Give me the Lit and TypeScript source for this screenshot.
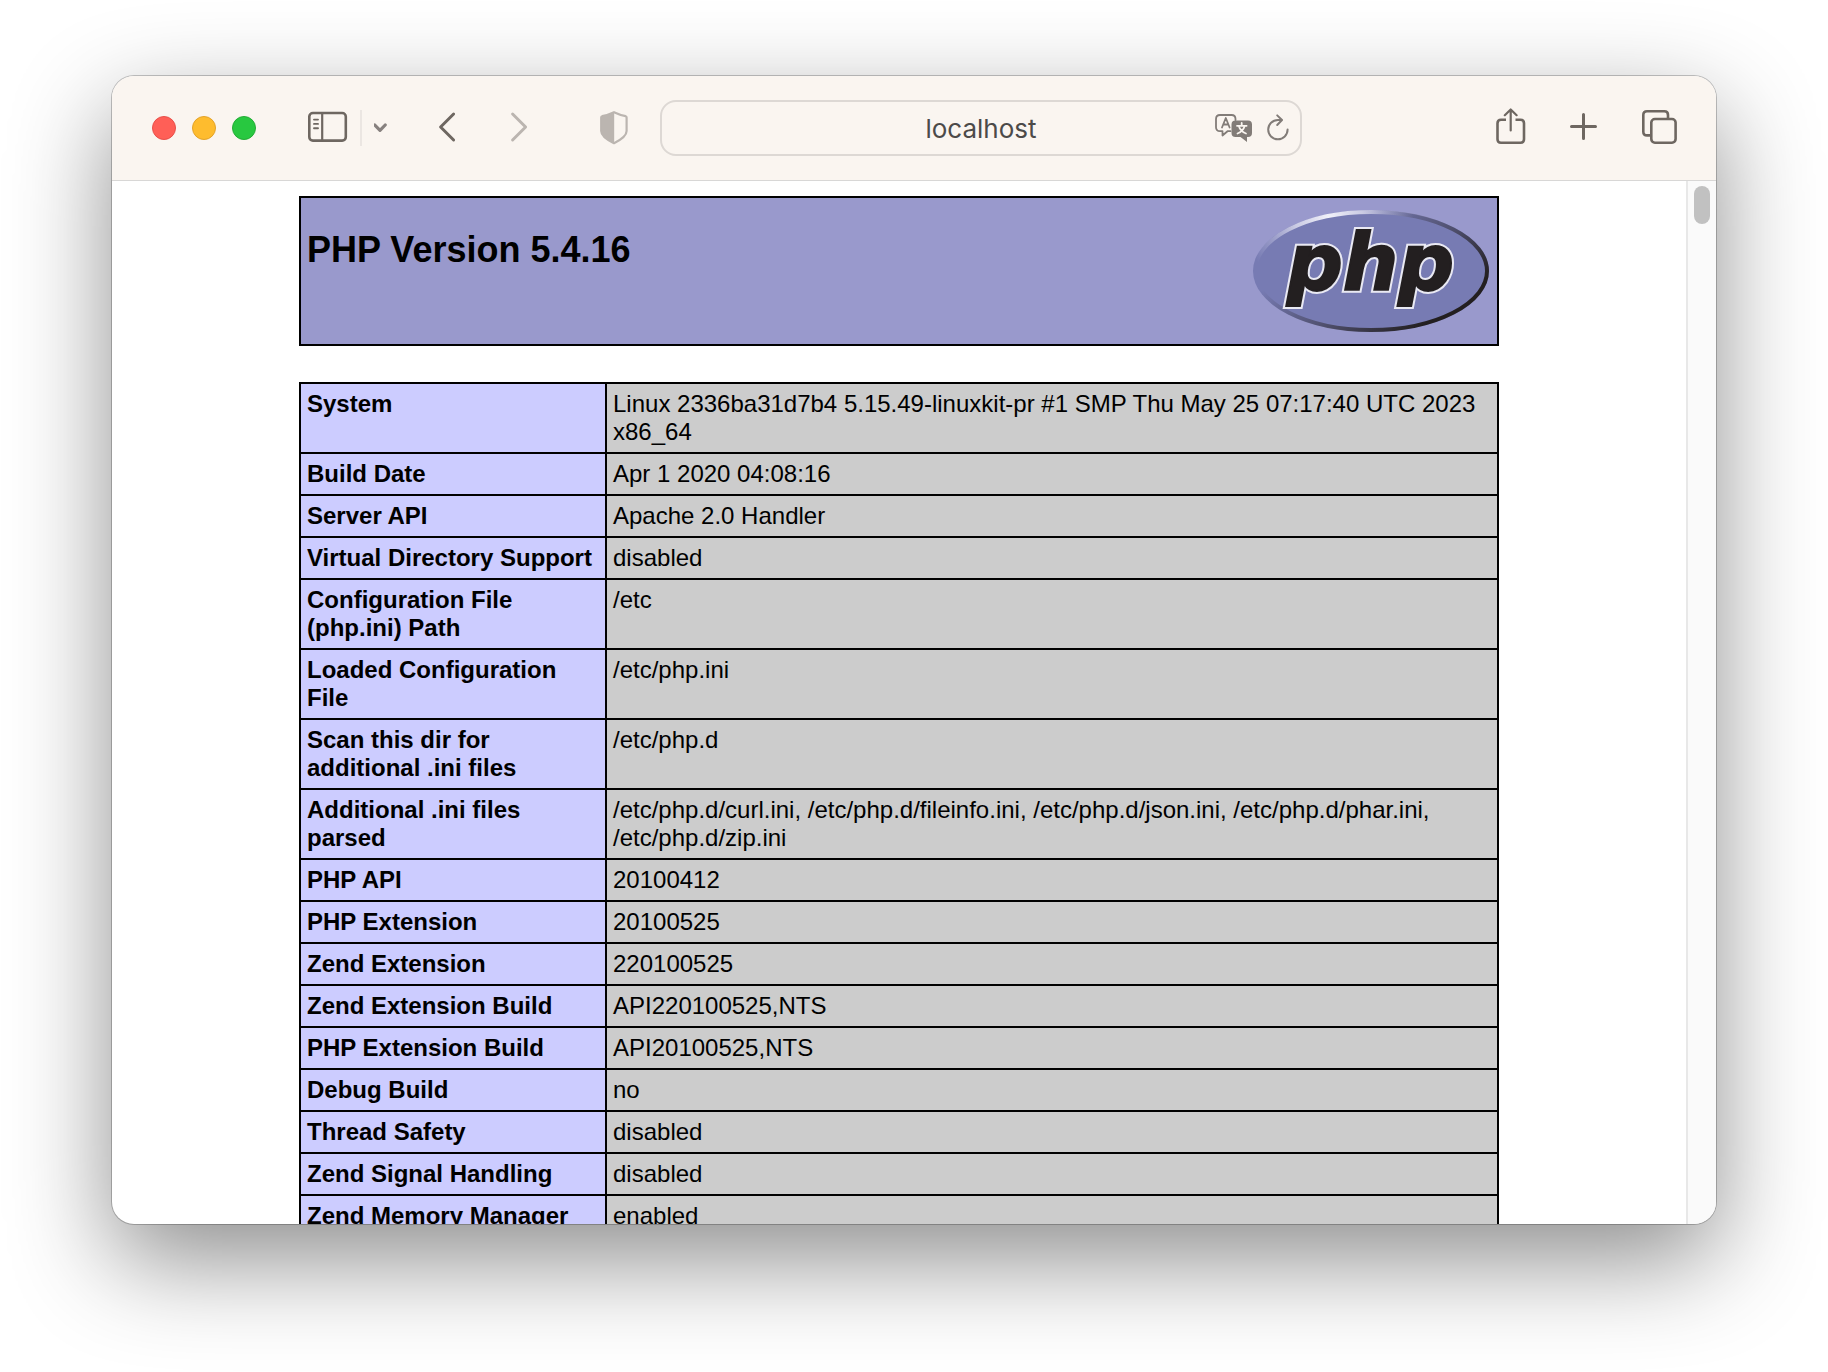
import { LitElement, html, css } from "lit";
import { customElement } from "lit/decorators.js";

const INFO: [string, string][] = [
  ["System", "Linux 2336ba31d7b4 5.15.49-linuxkit-pr #1 SMP Thu May 25 07:17:40 UTC 2023 x86_64"],
  ["Build Date", "Apr 1 2020 04:08:16"],
  ["Server API", "Apache 2.0 Handler"],
  ["Virtual Directory Support", "disabled"],
  ["Configuration File (php.ini) Path", "/etc"],
  ["Loaded Configuration File", "/etc/php.ini"],
  ["Scan this dir for additional .ini files", "/etc/php.d"],
  [
    "Additional .ini files parsed",
    "/etc/php.d/curl.ini, /etc/php.d/fileinfo.ini, /etc/php.d/json.ini, /etc/php.d/phar.ini, /etc/php.d/zip.ini",
  ],
  ["PHP API", "20100412"],
  ["PHP Extension", "20100525"],
  ["Zend Extension", "220100525"],
  ["Zend Extension Build", "API220100525,NTS"],
  ["PHP Extension Build", "API20100525,NTS"],
  ["Debug Build", "no"],
  ["Thread Safety", "disabled"],
  ["Zend Signal Handling", "disabled"],
  ["Zend Memory Manager", "enabled"],
];

@customElement("php-logo")
export class PhpLogo extends LitElement {
  static styles = css`
    :host {
      display: block;
    }
    svg {
      display: block;
    }
    .word {
      font: italic bold 78px "DejaVu Sans", Verdana, sans-serif;
      stroke-linejoin: miter;
    }
    .halo {
      fill: #e9e9f3;
      stroke: #e9e9f3;
      stroke-width: 6;
    }
    .ink {
      fill: #231f20;
      stroke: #231f20;
      stroke-width: 2;
    }
  `;

  render() {
    return html`
      <svg width="240" height="134" viewBox="0 0 240 134" role="img" aria-label="PHP logo">
        <defs>
          <radialGradient id="shine" gradientUnits="userSpaceOnUse" cx="78" cy="14" r="84">
            <stop offset="0" stop-color="#f2f2fa" />
            <stop offset="0.4" stop-color="#e0e0f0" stop-opacity="0.8" />
            <stop offset="1" stop-color="#c8c8e6" stop-opacity="0" />
          </radialGradient>
          <linearGradient id="shade" gradientUnits="userSpaceOnUse" x1="90" y1="27" x2="165" y2="127">
            <stop offset="0" stop-color="#231f20" stop-opacity="0" />
            <stop offset="0.5" stop-color="#231f20" stop-opacity="0.45" />
            <stop offset="1" stop-color="#231f20" />
          </linearGradient>
        </defs>
        <ellipse cx="120" cy="67" rx="118" ry="61" fill="#777bb3" />
        <ellipse cx="120" cy="67" rx="116" ry="59" fill="none" stroke="url(#shade)" stroke-width="4" />
        <ellipse cx="120" cy="67" rx="116" ry="59" fill="none" stroke="url(#shine)" stroke-width="4" />
        <text class="word halo" x="36" y="86">php</text>
        <text class="word ink" x="36" y="86">php</text>
      </svg>
    `;
  }
}

@customElement("browser-toolbar")
export class BrowserToolbar extends LitElement {
  static styles = css`
    :host {
      display: grid;
      grid-template-columns: 548fr 642fr 414fr;
      align-items: center;
      flex: none;
      box-sizing: border-box;
      height: 105px;
      background: #faf5f0;
      border-bottom: 1px solid #d8d7d6;
      color: #6e6761;
    }
    button {
      display: block;
      padding: 0;
      border: 0;
      background: none;
      color: inherit;
    }
    svg {
      display: block;
      fill: none;
      stroke: currentColor;
      stroke-linecap: round;
      stroke-linejoin: round;
    }
    .left {
      display: flex;
      align-items: center;
      padding: 0 32px 0 40px;
    }
    .lights {
      display: flex;
      gap: 16px;
    }
    .light {
      width: 24px;
      height: 24px;
      border-radius: 50%;
      border: 1px solid;
    }
    .close {
      background: #ff5f57;
      border-color: #e8504a;
    }
    .minimise {
      background: #febc2e;
      border-color: #e3a32a;
    }
    .zoom {
      background: #28c840;
      border-color: #24ac36;
    }
    .panel {
      display: flex;
      align-items: center;
      gap: 12px;
      margin-left: 52px;
    }
    .rule {
      width: 2px;
      height: 36px;
      background: #ebe6e2;
    }
    .history {
      display: flex;
      gap: 52px;
      margin-left: 48px;
    }
    .menu {
      color: #87817f;
    }
    .faint {
      color: #bbb5b0;
    }
    .privacy {
      margin-left: auto;
    }
    .field {
      display: grid;
      grid-template-columns: 96px 1fr 96px;
      align-items: center;
      height: 56px;
      box-sizing: border-box;
      border: 2px solid #ddd8d4;
      border-radius: 16px;
    }
    .address {
      grid-column: 2;
      min-width: 0;
      width: 100%;
      padding: 2px 0 0;
      border: 0;
      outline: 0;
      background: none;
      text-align: center;
      color: #4c4a49;
      font: 26px/32px Inter, "Liberation Sans", sans-serif;
    }
    .tools {
      display: flex;
      justify-content: flex-end;
      align-items: center;
      gap: 14px;
      padding-right: 11px;
      color: #827c78;
    }
    .right {
      display: flex;
      justify-content: flex-end;
      align-items: center;
      gap: 44px;
      padding-right: 38px;
    }
    .solid {
      fill: currentColor;
      stroke: none;
    }
    .glyph {
      stroke: #faf5f0;
    }
  `;

  render() {
    return html`
      <div class="left">
        <div class="lights">
          <button class="light close" aria-label="Close"></button>
          <button class="light minimise" aria-label="Minimise"></button>
          <button class="light zoom" aria-label="Zoom"></button>
        </div>
        <div class="panel">
          <button aria-label="Show sidebar">
            <svg width="40" height="36" viewBox="0 0 40 36" stroke-width="2.6">
              <rect x="1.300" y="3" width="36.500" height="27.600" rx="3.600" />
              <path d="M14.200 3v27.600" stroke-width="2.200" />
              <path d="M6 9.600h4M6 13.900h4M6 18.300h4" stroke-width="1.900" />
            </svg>
          </button>
          <span class="rule"></span>
          <button class="menu" aria-label="Tab groups">
            <svg width="16" height="36" viewBox="0 0 16 36" stroke-width="3.200">
              <path d="M.8 15l5.200 5.400L11.200 15" overflow="visible" />
            </svg>
          </button>
        </div>
        <div class="history">
          <button aria-label="Back">
            <svg width="20" height="36" viewBox="0 0 20 36" stroke-width="3">
              <path d="M15.600 4L2.600 17L15.600 30" />
            </svg>
          </button>
          <button class="faint" aria-label="Forward">
            <svg width="20" height="36" viewBox="0 0 20 36" stroke-width="3">
              <path d="M2.600 4L15.600 17L2.600 30" />
            </svg>
          </button>
        </div>
        <button class="privacy faint" aria-label="Privacy report">
          <svg width="28" height="36" viewBox="0 0 28 36" stroke-width="2.200">
            <path d="M14 2.200Q20 5 25.600 6.200Q26.600 6.500 26.600 7.500V21Q26.600 27 14 33.200Q1.200 27 1.200 21V7.500Q1.200 6.500 2.200 6.200Q8 5 14 2.200z" />
            <path class="solid" d="M14.200 2.200Q8 5 2.200 6.200Q1.200 6.500 1.200 7.500V21Q1.200 27 14.200 33.200z" />
          </svg>
        </button>
      </div>
      <div class="field">
        <input class="address" type="text" aria-label="Address" value="localhost" />
        <div class="tools">
          <button aria-label="Translate">
            <svg width="38" height="30" viewBox="0 0 38 30" stroke-width="1.800">
              <path d="M15.500 18.200H12.500L7.500 22.500V18.200H5Q1 18.200 1 14.200V6Q1 2 5 2H16.500Q20.500 2 20.500 6V7" />
              <path d="M7 14.500L10.800 5L14.600 14.500M8.200 11.500h5.200" />
              <path class="solid" d="M20.500 7.500H33Q37 7.500 37 11.500V20Q37 24 33 24H32V29L25.500 24H20.500Q16.500 24 16.500 20V11.500Q16.500 7.500 20.500 7.500z" />
              <path class="glyph" d="M26.700 10v2.600M22 12.800h9.600M23.800 13Q25.500 18.500 31 20.500M29.700 13Q28 18.500 22.500 20.500" />
            </svg>
          </button>
          <button aria-label="Reload">
            <svg width="22" height="30" viewBox="0 0 22 30" stroke-width="2">
              <path d="M20.600 16.600A9.700 9.700 0 1 1 10.900 6.900H14.500" />
              <path d="M10.200 2.400L15 7L10.200 12" />
            </svg>
          </button>
        </div>
      </div>
      <div class="right">
        <button aria-label="Share">
          <svg width="30" height="40" viewBox="0 0 30 40" stroke-width="2.600">
            <path stroke-linecap="butt" d="M10 11.800H5Q1.500 11.800 1.500 15.300V31.200Q1.500 34.700 5 34.700H24.500Q28 34.700 28 31.200V15.300Q28 11.800 24.500 11.800H19.500" />
            <path d="M14.700 22.500V2M8.800 7.200L14.700 1.500L20.600 7.200" stroke-width="2.200" />
          </svg>
        </button>
        <button aria-label="New tab">
          <svg width="28" height="36" viewBox="0 0 28 36" stroke-width="3">
            <path d="M1.500 16.500h24M13.500 4.500v24" />
          </svg>
        </button>
        <button aria-label="Tab overview">
          <svg width="36" height="40" viewBox="0 0 36 40" stroke-width="2.600">
            <path stroke-linecap="butt" d="M8.300 27.400H5Q1.300 27.400 1.300 23.700V7Q1.300 3.300 5 3.300H22.300Q26 3.300 26 7V10" />
            <rect x="9.300" y="11" width="24.300" height="23.700" rx="3.600" />
          </svg>
        </button>
      </div>
    `;
  }
}

@customElement("app-root")
export class AppRoot extends LitElement {
  static styles = css`
    :host {
      display: flex;
      height: 100vh;
      box-sizing: border-box;
      padding: 76px 112px 148px;
      background: #fff;
      overflow: hidden;
    }
    .window {
      flex: 1;
      min-width: 0;
      display: flex;
      flex-direction: column;
      border-radius: 22px;
      overflow: hidden;
      background: #fff;
      box-shadow: 0 0 0 1px rgba(0, 0, 0, 0.22), 0 36px 100px rgba(0, 0, 0, 0.45);
    }
    .viewport {
      flex: 1;
      min-height: 0;
      display: flex;
    }
    .page {
      flex: 1;
      min-width: 0;
      overflow: hidden;
      display: flex;
      flex-direction: column;
      align-items: center;
      gap: 36px;
      padding: 15px 16px 0;
      color: #000;
      font: 24px/28px "Liberation Sans", Arial, sans-serif;
    }
    .track {
      width: 28px;
      flex: none;
      display: flex;
      justify-content: center;
      padding-top: 5px;
      background: #fafafa;
      border-left: 2px solid #e8e8e8;
    }
    .thumb {
      width: 16px;
      height: 38px;
      border-radius: 8px;
      background: #c1c1c1;
    }
    .banner {
      width: 100%;
      max-width: 1200px;
      flex: none;
      box-sizing: border-box;
      display: flex;
      justify-content: space-between;
      padding: 6px;
      border: 2px solid #000;
      background: #9999cc;
    }
    .title {
      margin: 24px 0 0;
      font-size: 36px;
      line-height: 44px;
      font-weight: bold;
    }
    .info {
      width: 100%;
      max-width: 1200px;
      flex: none;
      table-layout: fixed;
      border-collapse: collapse;
    }
    .name,
    .value {
      padding: 6px;
      border: 2px solid #000;
      text-align: left;
      vertical-align: top;
    }
    .name {
      width: 292px;
      background: #ccccff;
      font-weight: bold;
    }
    .value {
      background: #cccccc;
    }
  `;

  render() {
    return html`
      <main class="window">
        <browser-toolbar></browser-toolbar>
        <div class="viewport">
          <div class="page">
            <header class="banner">
              <h1 class="title">PHP Version 5.4.16</h1>
              <php-logo></php-logo>
            </header>
            <table class="info">
              <tbody>
                ${INFO.map(
                  ([name, value]) => html`<tr>
                    <th class="name" scope="row">${name}</th>
                    <td class="value">${value}</td>
                  </tr>`
                )}
              </tbody>
            </table>
          </div>
          <div class="track"><div class="thumb"></div></div>
        </div>
      </main>
    `;
  }
}
